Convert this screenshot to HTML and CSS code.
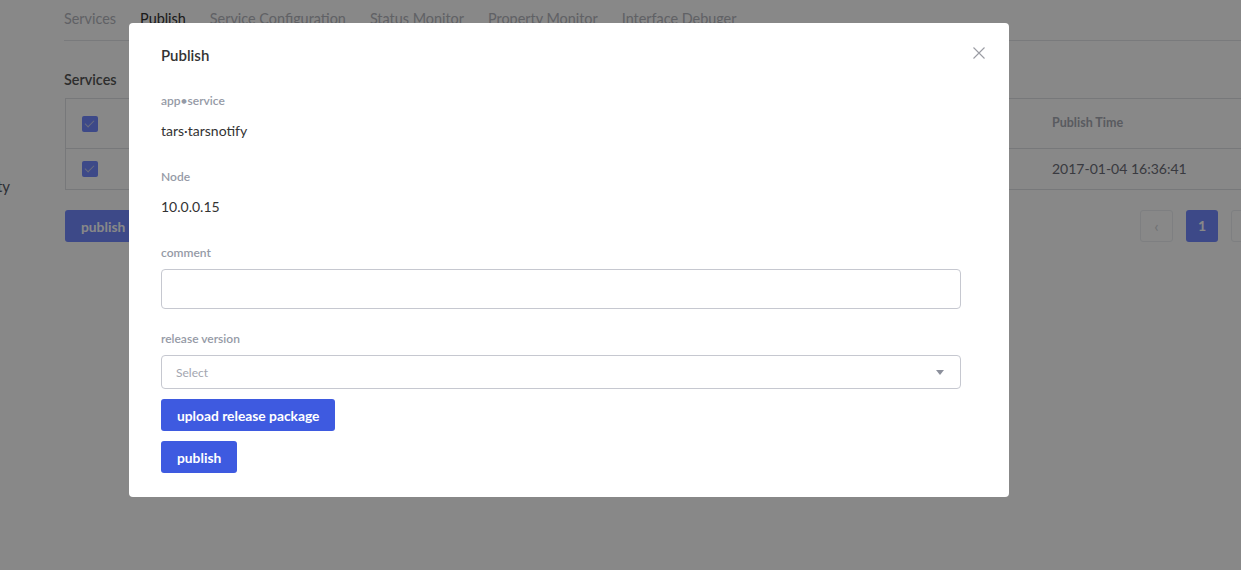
FILE: index.html
```html
<!DOCTYPE html>
<html lang="en">

<head>
    <meta charset="UTF-8">
    <meta name="viewport" content="width=device-width, initial-scale=1.0">
    <title>Publish</title>
    <link rel="stylesheet" href="styles.css">
</head>

<body>
    <div class="page">
        <!--left tree-->
        <aside class="side">
            <div class="side-item"><span>tarsproperty</span></div>
        </aside>
        <main class="main">
            <nav class="tabs">
                <a class="tab">Services</a>
                <a class="tab active">Publish</a>
                <a class="tab">Service Configuration</a>
                <a class="tab">Status Monitor</a>
                <a class="tab">Property Monitor</a>
                <a class="tab">Interface Debuger</a>
            </nav>
            <h3 class="sec-title">Services</h3>
            <div class="grid">
                <div class="row head">
                    <div class="cell"><i class="chk"></i></div>
                    <div class="cell">Service</div>
                    <div class="cell">Node</div>
                    <div class="cell">Patch</div>
                    <div class="cell">Version</div>
                    <div class="cell">Publish Time</div>
                </div>
                <div class="row">
                    <div class="cell"><i class="chk"></i></div>
                    <div class="cell">tarsnotify</div>
                    <div class="cell">10.0.0.15</div>
                    <div class="cell">1</div>
                    <div class="cell"></div>
                    <div class="cell">2017-01-04 16:36:41</div>
                </div>
            </div>
            <div class="actions">
                <button class="btn dim">publish</button>
                <div class="pager">
                    <span class="pg prev">&lsaquo;</span>
                    <span class="pg on">1</span>
                    <span class="pg">&rsaquo;</span>
                </div>
            </div>
        </main>
    </div>

    <!--弹窗-->
    <div class="mask">
        <div class="dialog">
            <div class="dialog-head">
                <span class="dialog-title">Publish</span>
                <svg class="close" width="12" height="12" viewBox="0 0 12 12">
                    <path d="M0.5 0.5L11.5 11.5M11.5 0.5L0.5 11.5" stroke="#9a9ca3" stroke-width="1.1" fill="none"/>
                </svg>
            </div>
            <div class="dialog-body">
                <div class="field">
                    <label>app&bull;service</label>
                    <p class="val">tars&middot;tarsnotify</p>
                </div>
                <div class="field">
                    <label>Node</label>
                    <p class="val">10.0.0.15</p>
                </div>
                <div class="field input">
                    <label>comment</label>
                    <input type="text" class="ipt">
                </div>
                <div class="field select">
                    <label>release version</label>
                    <div class="sel">
                        <span>Select</span>
                        <i class="arrow"></i>
                    </div>
                </div>
                <button class="btn">upload release package</button>
                <button class="btn">publish</button>
            </div>
        </div>
    </div>
</body>

</html>
```

FILE: styles.css
```css
html,
body {
    height: 100%;
}

body {
    margin: 0;
    overflow: hidden;
    background: #fff;
    font-family: Lato, "Open Sans", sans-serif;
    color: #333;
}

.page {
    display: flex;
    width: 1280px;
}

.side {
    width: 64px;
    flex: none;
    padding-top: 176px;
}

.side-item {
    display: flex;
    justify-content: flex-end;
    padding-right: 54px;
    font-size: 15px;
    line-height: 20px;
    color: #555a66;
    white-space: nowrap;
}

.main {
    width: 1200px;
    flex: none;
}

.tabs {
    display: flex;
    gap: 24px;
    padding-top: 9px;
    height: 31px;
    border-bottom: 1px solid #e3e4e8;
}

.tab {
    font-size: 14.4px;
    line-height: 20px;
    color: #b4b6bd;
}

.tab.active {
    color: #333;
}

.sec-title {
    margin: 29px 0 8px;
    font-size: 14.4px;
    line-height: 20px;
    font-weight: 600;
    color: #555;
}

.grid {
    border: 1px solid #e0e1e5;
    margin-left: 1px;
}

.row {
    display: grid;
    grid-template-columns: 48px 280px 280px 276px 86px 1fr;
    height: 40px;
    align-items: center;
    font-size: 14px;
    color: #6c6e78;
}

.row + .row {
    border-top: 1px solid #e0e1e5;
}

.row.head {
    height: 49px;
    font-size: 12.5px;
    font-weight: 700;
    color: #a8abb4;
}

.row.head .cell + .cell {
    padding-bottom: 3px;
}

.row .cell:last-child {
    padding-bottom: 2px;
}

.cell {
    padding-left: 16px;
    white-space: nowrap;
}

.chk {
    display: block;
    width: 16px;
    height: 16px;
    border-radius: 2px;
    background: #7389ff;
    position: relative;
}

.chk::after {
    content: '';
    position: absolute;
    left: 5px;
    top: 2px;
    width: 4px;
    height: 8px;
    border: solid #c6ccec;
    border-width: 0 1px 1px 0;
    transform: rotate(45deg);
}

.actions {
    display: flex;
    justify-content: space-between;
    margin-top: 20px;
    margin-left: 1px;
}

.btn {
    display: block;
    height: 32px;
    padding: 0 16px;
    border: 0;
    border-radius: 3px;
    background: #3e5ae0;
    color: #fff;
    font-family: Lato, "Open Sans", sans-serif;
    font-size: 13.8px;
    font-weight: 700;
}

.btn.dim {
    background: #7389ff;
    width: 120px;
    text-align: left;
}

.pager {
    display: flex;
    gap: 13px;
}

.pg {
    width: 31px;
    height: 30px;
    border: 1px solid #eceef2;
    border-radius: 3px;
    text-align: center;
    line-height: 30px;
    font-size: 16px;
    color: #d0d2d8;
}

.pg.on {
    width: 32px;
    height: 32px;
    line-height: 32px;
    border: 0;
    background: #7389ff;
    color: #fff;
    font-size: 14px;
    font-weight: 700;
}

/*遮罩*/
.mask {
    position: fixed;
    left: 0;
    top: 0;
    right: 0;
    bottom: 0;
    background: rgba(0, 0, 0, 0.467);
    padding: 23px 0 0 129px;
}

.dialog {
    width: 880px;
    background: #fff;
    border-radius: 4px;
}

.dialog-head {
    display: flex;
    justify-content: space-between;
    align-items: flex-start;
    padding: 22px 24px 0 32px;
}

.dialog-title {
    font-size: 15px;
    line-height: 20px;
    font-weight: 600;
    color: #333;
}

.close {
    margin-top: 2px;
}

.dialog-body {
    padding: 27px 48px 24px 32px;
}

.field {
    margin-bottom: 27px;
}

.field label {
    display: block;
    font-size: 12px;
    line-height: 18px;
    font-weight: 600;
    color: #959aa6;
}

.val {
    margin: 11px 0 0;
    font-size: 14px;
    line-height: 20px;
    color: #333;
}

.field.input {
    margin-bottom: 21px;
}

.field.select {
    margin-bottom: 10px;
}

.ipt {
    display: block;
    box-sizing: border-box;
    width: 100%;
    height: 40px;
    margin-top: 7px;
    border: 1px solid #c6c8d0;
    border-radius: 4px;
}

.sel {
    display: flex;
    justify-content: space-between;
    align-items: center;
    box-sizing: border-box;
    height: 34px;
    margin-top: 7px;
    padding: 0 16px 0 14px;
    border: 1px solid #c6c8d0;
    border-radius: 4px;
    font-size: 12px;
    color: #a3a6b0;
}

.arrow {
    width: 0;
    height: 0;
    border-left: 4px solid transparent;
    border-right: 4px solid transparent;
    border-top: 5px solid #8c909c;
}

.dialog-body .btn + .btn {
    margin-top: 10px;
}
```
